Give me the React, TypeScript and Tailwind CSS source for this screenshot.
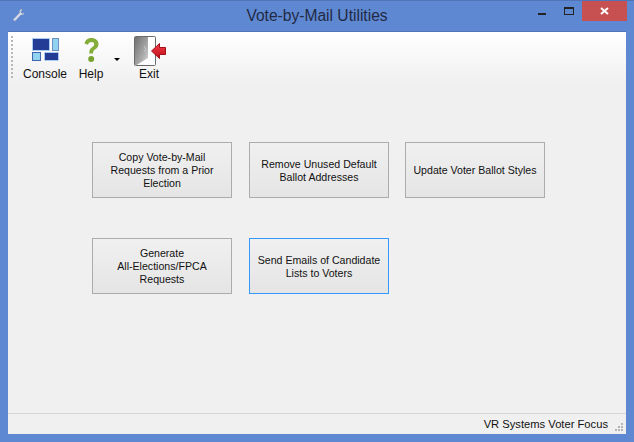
const FONT = "font-['Liberation_Sans',Arial,sans-serif]";

function ActionButton({ lines, focused }: { lines: string[]; focused?: boolean }) {
  return (
    <button
      className={`h-[56px] w-[140px] whitespace-nowrap border bg-gradient-to-b from-[#f0f0f0] to-[#e5e5e5] text-center text-[10.6px] leading-[13px] text-[#111] ${
        focused ? 'border-[#3399ff]' : 'border-[#acacac]'
      } ${lines.length === 2 ? 'pt-[2px]' : ''}`}
    >
      {lines.map((line) => (
        <div key={line}>{line}</div>
      ))}
    </button>
  );
}

function ConsoleIcon() {
  return (
    <svg width="30" height="24" viewBox="0 0 30 24">
      <rect x="1.500" y="0.500" width="17" height="12" fill="#243c96" stroke="#a9cdf0" />
      <rect x="21.500" y="0.500" width="6" height="12" fill="#8fd3f0" stroke="#6f8fc0" />
      <rect x="1.500" y="14.500" width="8" height="8" fill="#8fd3f0" stroke="#3f65ac" />
      <rect x="13.500" y="14.500" width="14" height="8" rx="1" fill="#243c96" stroke="#a9cdf0" />
    </svg>
  );
}

function HelpIcon() {
  return (
    <svg width="18" height="26" viewBox="0 0 18 26">
      <path
        d="M2.500 6.500C3.500 2.500 6 1 9.500 1 13.500 1 16.500 3.500 16.500 7c0 3-2 4.500-3.500 5.500-1.500 1-2 2-2 4H7.200c0-3 .7-4.700 2.500-6 1.500-1 2.500-2 2.500-3.300 0-1.300-1-2.200-2.700-2.200-1.800 0-3 1-3.500 2.800Z"
        fill="#84ad3a"
      />
      <circle cx="9.200" cy="22" r="3" fill="#78a22f" />
    </svg>
  );
}

function ExitIcon() {
  return (
    <svg width="33" height="31" viewBox="0 0 33 31">
      <defs>
        <linearGradient id="door" x1="0" y1="0" x2="1" y2="1">
          <stop offset="0" stopColor="#6f6f6f" />
          <stop offset="0.6" stopColor="#a8a8a8" />
          <stop offset="1" stopColor="#dedede" />
        </linearGradient>
        <linearGradient id="arrow" x1="0" y1="0" x2="0" y2="1">
          <stop offset="0" stopColor="#f04048" />
          <stop offset="1" stopColor="#c00c18" />
        </linearGradient>
      </defs>
      <rect x="0.500" y="0.500" width="21" height="29" rx="1" fill="#fff" stroke="#6b6b6b" />
      <path d="M1 1h13v21L1 30Z" fill="url(#door)" />
      <path d="M10 10l2 3-2 3" fill="none" stroke="#c9c9c9" strokeWidth="1" />
      <path d="M17.500 15l8-7.500v4h6v7h-6v4Z" fill="url(#arrow)" stroke="#a30f18" strokeWidth="1" />
    </svg>
  );
}

export default function App() {
  return (
    <div className={`flex h-[442px] w-[634px] flex-col overflow-hidden border-t border-[#4f74b8] bg-[#5f88d2] ${FONT}`}>
      <div className="relative flex h-[30px] shrink-0 items-center justify-center">
        <svg className="absolute left-[12px] top-[7px]" width="13" height="15" viewBox="0 0 13 15">
          <path d="M9.500 1C7.800 1.500 7 3 7.500 4.800L1 11.500 2.800 13.500 9 7c1.800.5 3.300-.7 3.300-3L10.500 5.500 8.800 4l1.700-2.500Z" fill="#d5dcec" stroke="#6d7fa8" strokeWidth="0.500" />
        </svg>
        <span className="text-[15.6px] text-[#1f2a44]">Vote-by-Mail Utilities</span>
        <div className="absolute right-[7px] top-0 flex items-start">
          <div className="mr-[18px] mt-[12px] h-[2px] w-[8px] bg-[#222]" />
          <div className="mr-[8px] mt-[6px] h-[8px] w-[10px] border border-t-[2px] border-[#222]" />
          <div className="flex h-[20px] w-[45px] items-center justify-center bg-[#c75050]">
            <svg width="9" height="8" viewBox="0 0 9 8">
              <path d="M1 1l7 6M8 1L1 7" stroke="#fff" strokeWidth="2" />
            </svg>
          </div>
        </div>
      </div>

      <div className="mx-[8px] mb-[8px] flex flex-1 flex-col border-t border-[#4f74b8] bg-[#f0f0f0] text-[12px] text-[#111]">
        <div className="relative flex h-[52px] shrink-0 bg-gradient-to-b from-white to-[#f0f0f0] pl-[3px] pt-[3px]">
          <div className="mt-[1px] flex h-[44px] w-[2px] flex-col gap-[2px]">
            {Array.from({ length: 11 }).map((_, i) => (
              <div key={i} className="h-[2px] w-[2px] bg-[#b8b8b8]" />
            ))}
          </div>
          <div className="ml-[9px] flex w-[46px] flex-col items-center">
            <div className="ml-[2px] mt-[3px] h-[26px]">
              <ConsoleIcon />
            </div>
            <span className="mt-[3px] leading-[14px]">Console</span>
          </div>
          <div className="ml-[7px] flex w-[32px] flex-col items-center">
            <div className="h-[30px] pt-[2px]">
              <HelpIcon />
            </div>
            <span className="mt-[2px] leading-[14px]">Help</span>
          </div>
          <div className="ml-[7px] mt-[23px] h-0 w-0 border-x-[3px] border-t-[3px] border-x-transparent border-t-black" />
          <div className="ml-[11px] flex w-[36px] flex-col items-center">
            <div className="h-[31px] pl-[3px] pt-[1px]">
              <ExitIcon />
            </div>
            <span className="mt-[1px] leading-[14px]">Exit</span>
          </div>
        </div>

        <div className="flex-1 pl-[84px] pt-[58px]">
          <div className="flex">
            <ActionButton lines={['Copy Vote-by-Mail', 'Requests from a Prior', 'Election']} />
            <div className="ml-[17px]">
              <ActionButton lines={['Remove Unused Default', 'Ballot Addresses']} />
            </div>
            <div className="ml-[16px]">
              <ActionButton lines={['Update Voter Ballot Styles']} />
            </div>
          </div>
          <div className="mt-[40px] flex">
            <ActionButton lines={['Generate', 'All-Elections/FPCA', 'Requests']} />
            <div className="ml-[17px]">
              <ActionButton focused lines={['Send Emails of Candidate', 'Lists to Voters']} />
            </div>
          </div>
        </div>

        <div className="relative flex h-[21px] shrink-0 items-center justify-end border-t border-[#d7d7d7] pr-[18px]">
          <span className="text-[11.2px]">VR Systems Voter Focus</span>
          <div className="absolute bottom-[3px] right-[3px] grid grid-cols-3 gap-[1px]">
            {[0, 0, 1, 0, 1, 1, 1, 1, 1].map((on, i) => (
              <div key={i} className={`h-[2px] w-[2px] ${on ? 'bg-[#b5b5b5]' : ''}`} />
            ))}
          </div>
        </div>
      </div>
    </div>
  );
}
